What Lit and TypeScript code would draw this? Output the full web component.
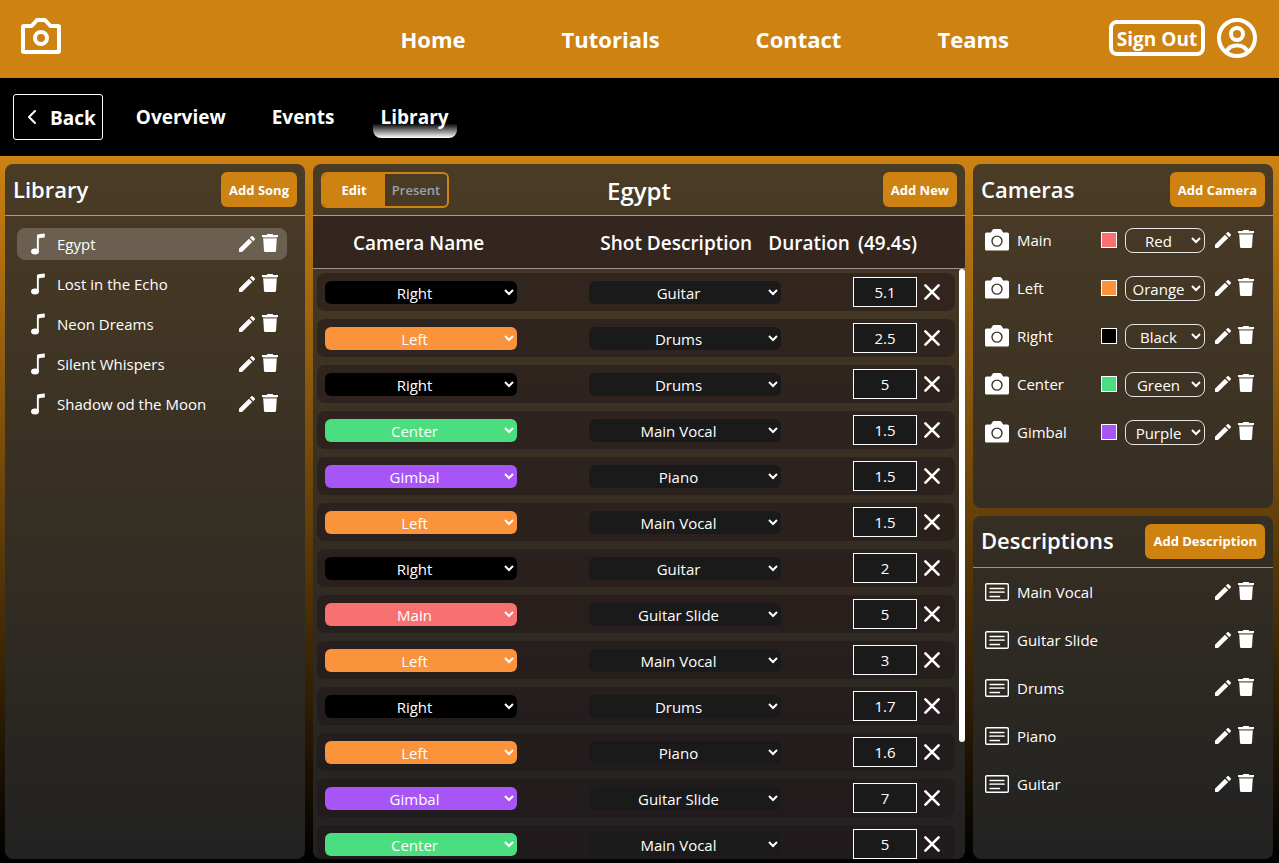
import { LitElement, html, css, svg } from "lit";
import { customElement, property, query, state } from "lit/decorators.js";
import { classMap } from "lit/directives/class-map.js";

const CAMERA_COLORS: Record<string, string> = {
  Main: "red",
  Left: "orange",
  Right: "black",
  Center: "green",
  Gimbal: "purple",
};
const COLOR_NAMES = ["Red", "Orange", "Black", "Green", "Purple"];
const DESCRIPTIONS = ["Main Vocal", "Guitar Slide", "Drums", "Piano", "Guitar"];
const SONGS = ["Egypt", "Lost in the Echo", "Neon Dreams", "Silent Whispers", "Shadow od the Moon"];

interface Shot {
  camera: string;
  description: string;
  duration: string;
}

const SHOTS: Shot[] = [
  ["Right", "Guitar", "5.1"],
  ["Left", "Drums", "2.5"],
  ["Right", "Drums", "5"],
  ["Center", "Main Vocal", "1.5"],
  ["Gimbal", "Piano", "1.5"],
  ["Left", "Main Vocal", "1.5"],
  ["Right", "Guitar", "2"],
  ["Main", "Guitar Slide", "5"],
  ["Left", "Main Vocal", "3"],
  ["Right", "Drums", "1.7"],
  ["Left", "Piano", "1.6"],
  ["Gimbal", "Guitar Slide", "7"],
  ["Center", "Main Vocal", "5"],
  ["Left", "Drums", "2"],
  ["Right", "Guitar", "3"],
  ["Main", "Piano", "2"],
].map(([camera, description, duration]) => ({ camera, description, duration }));

const ICONS = {
  logo: {
    box: "0 0 40 36",
    art: svg`<g fill="none" stroke="currentColor" stroke-width="4" stroke-linejoin="round"><path d="M3 8H10.6L16 2H24L29.4 8H37Q38 8 38 9V33Q38 34 37 34H3Q2 34 2 33V9Q2 8 3 8Z"/><circle cx="20" cy="20" r="6"/></g>`,
  },
  user: {
    box: "0 0 40 40",
    art: svg`<g fill="none" stroke="currentColor" stroke-width="4"><circle cx="20" cy="20" r="18"/><circle cx="20" cy="16" r="6"/><path d="M9.5 34C11 29.5 14 27.5 20 27.5S29 29.5 30.5 34"/></g>`,
  },
  back: {
    box: "0 0 8 14",
    art: svg`<path d="M7 1L1 7L7 13" fill="none" stroke="currentColor" stroke-width="2" stroke-linecap="round" stroke-linejoin="round"/>`,
  },
  note: {
    box: "0 0 15 22",
    art: svg`<g fill="currentColor"><ellipse cx="4" cy="18.5" rx="4" ry="3"/><path d="M5.9 3.2C5.9 1.2 6.8 1.4 9.6 1C12.2.6 13.2.2 13.5.6Q14 1 13.8 4.2C12 4.9 8 4.6 7.8 5.8V18.5H5.9Z"/></g>`,
  },
  pencil: {
    box: "3 3 18 18",
    art: svg`<path fill="currentColor" d="M20.7 7a1 1 0 0 0 0-1.4l-2.3-2.3a1 1 0 0 0-1.4 0l-1.8 1.7 3.8 3.8zM3 17.7V20.5q0 .5.5.5H6.2q.3 0 .5-.2L17.9 9.8 14.2 6.1 3.2 17.2Q3 17.4 3 17.7z"/>`,
  },
  trash: {
    box: "0 0 16 18",
    art: svg`<g fill="currentColor"><path d="M5 0H11V1H16V3H0V1H5Z"/><path opacity=".45" d="M1 3H15V5H1Z"/><path d="M1.2 4.8H14.8L14 16.8Q13.9 18 12.7 18H3.3Q2.1 18 2 16.8Z"/></g>`,
  },
  camera: {
    box: "0 0 24 22",
    art: svg`<path fill="currentColor" fill-rule="evenodd" d="M1.5 3.5H6L7.4 1.1Q8 0 9.2 0H14.8Q16 0 16.6 1.1L18 3.5H22.5Q24 3.5 24 5V20Q24 21.5 22.5 21.5H1.5Q0 21.5 0 20V5Q0 3.5 1.5 3.5ZM12 6.4A5.7 5.7 0 1 0 12 17.8A5.7 5.7 0 1 0 12 6.4ZM12 7.8A4.3 4.3 0 1 1 12 16.4A4.3 4.3 0 1 1 12 7.8Z"/>`,
  },
  caption: {
    box: "0 0 24 18",
    art: svg`<g fill="none" stroke="currentColor" stroke-width="1.4" stroke-linecap="round"><rect x=".7" y=".7" width="22.6" height="16.6" rx="1.2"/><path d="M5 5.5H19M5 13.5H14.5"/><path d="M5 9.2H19" stroke-width="1.8" opacity=".8"/></g>`,
  },
  close: {
    box: "0 0 16 16",
    art: svg`<path d="M1.4 1.4L14.6 14.6M14.6 1.4L1.4 14.6" fill="none" stroke="currentColor" stroke-width="2.6" stroke-linecap="round"/>`,
  },
};

const icon = (name: keyof typeof ICONS) =>
  html`<svg class="icon icon-${name}" viewBox=${ICONS[name].box} aria-hidden="true">${ICONS[name].art}</svg>`;

const shared = css`
  * {
    box-sizing: border-box;
  }
  :host {
    font-family: "Open Sans", "Noto Sans", sans-serif;
    color: #fff;
  }
  button,
  input,
  select {
    margin: 0;
    font: inherit;
    color: inherit;
  }
  button {
    padding: 0;
    border: 0;
    background: none;
    cursor: pointer;
  }
  h2,
  ul {
    margin: 0;
    padding: 0;
    list-style: none;
  }
  .icon {
    display: block;
    flex: none;
  }
  .icon-pencil {
    width: 16px;
    height: 16px;
  }
  .icon-trash {
    width: 16px;
    height: 18px;
  }
  .primary {
    height: 35px;
    padding: 0 8px;
    border-radius: 6px;
    background: #cd8212;
    font-size: 13px;
    font-weight: 700;
    white-space: nowrap;
  }
  .red {
    background-color: #f87171;
  }
  .orange {
    background-color: #fb923c;
  }
  .black {
    background-color: #000;
  }
  .green {
    background-color: #4ade80;
  }
  .purple {
    background-color: #a855f7;
  }
`;

@customElement("side-panel")
class SidePanel extends LitElement {
  @property() heading = "";
  @property() action = "";

  static styles = [
    shared,
    css`
      :host {
        display: flex;
        flex-direction: column;
        min-height: 0;
        border-radius: 8px;
        background: rgba(42, 42, 42, 0.8);
        overflow: hidden;
      }
      .head {
        display: flex;
        align-items: center;
        justify-content: space-between;
        height: 52px;
        padding: 0 8px;
        border-bottom: 1px solid rgba(255, 255, 255, 0.5);
      }
      h2 {
        padding-bottom: 2px;
        font-size: 22px;
        font-weight: 600;
      }
    `,
  ];

  render() {
    return html`
      <header class="head">
        <h2>${this.heading}</h2>
        <button class="primary">${this.action}</button>
      </header>
      <slot></slot>
    `;
  }
}

@customElement("row-tools")
class RowTools extends LitElement {
  @property() name = "";

  static styles = [
    shared,
    css`
      :host {
        display: flex;
        align-items: center;
        gap: 7px;
      }
      .trash {
        padding-bottom: 2px;
      }
    `,
  ];

  render() {
    return html`
      <button aria-label="Edit ${this.name}">${icon("pencil")}</button>
      <button class="trash" aria-label="Delete ${this.name}">${icon("trash")}</button>
    `;
  }
}

@customElement("shot-table")
class ShotTable extends LitElement {
  @state() private shots = SHOTS;
  @state() private mode = "Edit";
  @state() private thumbSize = 100;
  @state() private thumbTop = 0;
  @query("tbody") private list!: HTMLElement;

  private observer = new ResizeObserver(() => this.measure());

  static styles = [
    shared,
    css`
      :host {
        display: flex;
        flex-direction: column;
        min-width: 0;
        min-height: 0;
        border-radius: 8px;
        background: rgba(42, 42, 42, 0.8);
        overflow: hidden;
      }
      .head {
        display: grid;
        grid-template-columns: 1fr auto 1fr;
        align-items: center;
        flex: none;
        height: 52px;
        padding: 0 8px;
        border-bottom: 1px solid rgba(255, 255, 255, 0.5);
      }
      h2 {
        padding-top: 2px;
        font-size: 24px;
        font-weight: 600;
      }
      .head .primary {
        justify-self: end;
      }
      .switch {
        display: flex;
        justify-self: start;
        width: 128px;
        height: 36px;
        border: 2px solid #cd8212;
        border-radius: 6px;
        overflow: hidden;
      }
      .switch button {
        flex: 1;
        color: #9ca3af;
        font-size: 13px;
        font-weight: 600;
      }
      .switch .on {
        background: #cd8212;
        color: #fff;
        font-weight: 700;
      }
      .area {
        position: relative;
        display: flex;
        flex: 1;
        min-height: 0;
      }
      table,
      tbody {
        display: flex;
        flex: 1;
        flex-direction: column;
        min-height: 0;
      }
      thead {
        display: block;
        flex: none;
      }
      th,
      td {
        display: block;
        padding: 0;
      }
      .titles {
        display: flex;
        align-items: center;
        gap: 16px;
        height: 53px;
        padding: 2px 48px 0 40px;
        border-bottom: 1px solid rgba(255, 255, 255, 0.5);
        background: rgba(32, 20, 24, 0.5);
        font-size: 19px;
        white-space: nowrap;
      }
      .titles th {
        display: flex;
        gap: 8px;
        font-weight: 600;
      }
      .titles th:first-child {
        margin-right: auto;
      }
      tbody {
        padding-right: 6px;
        overflow-y: auto;
      }
      tbody::-webkit-scrollbar {
        display: none;
      }
      .track {
        position: absolute;
        top: 53px;
        right: 0;
        bottom: 0;
        width: 6px;
        pointer-events: none;
      }
      .thumb {
        position: absolute;
        width: 6px;
        border-radius: 3px;
        background: #fff;
      }
      .shot {
        display: flex;
        align-items: center;
        justify-content: space-between;
        flex: none;
        height: 38px;
        margin: 4px;
        padding: 0 8px;
        border-radius: 8px;
        background: rgba(32, 20, 24, 0.5);
      }
      .shot td {
        display: flex;
        align-items: center;
      }
      select {
        width: 192px;
        height: 23px;
        padding: 1px 1px 0 0;
        border: 0;
        border-radius: 6px;
        font-size: 15px;
        text-align: center;
      }
      .description {
        background-color: #1a1a1a;
      }
      input {
        width: 64px;
        height: 30px;
        padding: 0;
        border: 1px solid #fff;
        background: #1a1a1a;
        font-size: 15px;
        text-align: center;
        appearance: textfield;
      }
      input::-webkit-inner-spin-button {
        display: none;
      }
      .remove {
        display: grid;
        place-items: center;
        width: 30px;
        height: 30px;
      }
      .icon-close {
        width: 16px;
        height: 16px;
      }
    `,
  ];

  firstUpdated() {
    this.observer.observe(this.list);
  }

  updated() {
    this.measure();
  }

  disconnectedCallback() {
    super.disconnectedCallback();
    this.observer.disconnect();
  }

  private measure() {
    const { clientHeight, scrollHeight, scrollTop } = this.list;
    this.thumbSize = (clientHeight / scrollHeight) * 100;
    this.thumbTop = (scrollTop / scrollHeight) * 100;
  }

  private options(list: string[], current: string) {
    return list.map((item) => html`<option ?selected=${item === current}>${item}</option>`);
  }

  private remove(shot: Shot) {
    this.shots = this.shots.filter((other) => other !== shot);
  }

  render() {
    return html`
      <header class="head">
        <div class="switch">
          ${["Edit", "Present"].map(
            (mode) => html`<button
              class=${classMap({ on: this.mode === mode })}
              aria-pressed=${this.mode === mode}
              @click=${() => (this.mode = mode)}
            >
              ${mode}
            </button>`,
          )}
        </div>
        <h2>Egypt</h2>
        <button class="primary">Add New</button>
      </header>
      <div class="area">
        <table>
          <thead>
            <tr class="titles">
              <th scope="col">Camera Name</th>
              <th scope="col">Shot Description</th>
              <th scope="col"><span>Duration</span> <span>(49.4s)</span></th>
            </tr>
          </thead>
          <tbody @scroll=${this.measure}>
            ${this.shots.map(
              (shot) => html`<tr class="shot">
                <td>
                  <select class=${CAMERA_COLORS[shot.camera]} aria-label="Camera">
                    ${this.options(Object.keys(CAMERA_COLORS), shot.camera)}
                  </select>
                </td>
                <td>
                  <select class="description" aria-label="Shot description">
                    ${this.options(DESCRIPTIONS, shot.description)}
                  </select>
                </td>
                <td>
                  <input type="number" step="0.1" aria-label="Duration in seconds" .value=${shot.duration} />
                  <button class="remove" aria-label="Remove shot" @click=${() => this.remove(shot)}>
                    ${icon("close")}
                  </button>
                </td>
              </tr>`,
            )}
          </tbody>
        </table>
        <div class="track">
          <div class="thumb" style="height: ${this.thumbSize}%; top: ${this.thumbTop}%"></div>
        </div>
      </div>
    `;
  }
}

@customElement("app-root")
class AppRoot extends LitElement {
  @state() private song = "Egypt";

  static styles = [
    shared,
    css`
      :host {
        display: flex;
        flex-direction: column;
        height: 100vh;
        background: #000;
        font-size: 15px;
      }
      a {
        color: inherit;
        text-decoration: none;
      }
      .top {
        display: flex;
        align-items: center;
        flex: none;
        height: 78px;
        padding: 0 22px 2px 21px;
        background: #cd8212;
      }
      .logo {
        padding-bottom: 4px;
      }
      .icon-logo {
        width: 40px;
        height: 36px;
      }
      .icon-user {
        width: 40px;
        height: 40px;
      }
      .pages {
        display: flex;
        flex: 1;
        justify-content: flex-end;
        gap: 96px;
        padding: 2px 100px 0 0;
        font-size: 22px;
        font-weight: 700;
      }
      .account {
        display: flex;
        align-items: center;
        gap: 12px;
      }
      .signout {
        width: 96px;
        height: 36px;
        padding-top: 2px;
        border: 4px solid #fff;
        border-radius: 8px;
        font-size: 19px;
        line-height: 26px;
        font-weight: 700;
        white-space: nowrap;
      }
      .sub {
        display: flex;
        align-items: center;
        gap: 30px;
        flex: none;
        height: 78px;
        padding: 0 13px;
        font-size: 19px;
        font-weight: 700;
      }
      .back {
        display: flex;
        align-items: center;
        gap: 14px;
        height: 46px;
        margin-right: -5px;
        padding: 0 6px 0 14px;
        border: 1px solid #fff;
        border-radius: 3px;
      }
      .back span {
        padding-top: 2px;
      }
      .icon-back {
        width: 8px;
        height: 14px;
      }
      .tab {
        height: 42px;
        padding: 0 8px;
        border-radius: 8px;
        line-height: 42px;
      }
      .current {
        background: linear-gradient(to bottom, transparent 65%, #fff);
      }
      .board {
        display: grid;
        grid-template-columns: 300px minmax(0, 1fr) 300px;
        gap: 8px;
        flex: 1;
        min-height: 0;
        padding: 8px 6px 4px 5px;
        background: linear-gradient(to bottom, #cd8212, #000);
      }
      .side {
        display: grid;
        grid-template-rows: 1fr 1fr;
        gap: 8px;
        min-height: 0;
      }
      .songs {
        display: grid;
        gap: 8px;
        padding: 12px 18px 0 12px;
      }
      .song {
        display: flex;
        align-items: center;
        gap: 11px;
        height: 32px;
        padding: 0 9px 0 14px;
        border-radius: 8px;
      }
      .active {
        background: rgba(255, 255, 255, 0.2);
      }
      .icon-note {
        width: 15px;
        height: 22px;
      }
      .name {
        flex: 1;
        text-align: left;
        white-space: nowrap;
      }
      .items {
        display: grid;
        gap: 16px;
        padding: 8px 19px 0 12px;
      }
      .item {
        display: flex;
        align-items: center;
        gap: 8px;
        height: 32px;
      }
      .item row-tools {
        margin-left: 2px;
      }
      .icon-camera {
        width: 24px;
        height: 22px;
      }
      .icon-caption {
        width: 24px;
        height: 18px;
      }
      .swatch {
        width: 16px;
        height: 16px;
        border: 1px solid #fff;
      }
      .tint {
        width: 80px;
        height: 25px;
        padding: 1px 1px 0 0;
        border: 1px solid #e5e5e5;
        border-radius: 8px;
        background: transparent;
        font-size: 15px;
        text-align: center;
      }
      .tint option {
        background: #1a1a1a;
      }
    `,
  ];

  render() {
    return html`
      <header class="top">
        <a class="logo" href="#home" aria-label="Home page">${icon("logo")}</a>
        <nav class="pages">
          ${["Home", "Tutorials", "Contact", "Teams"].map(
            (page) => html`<a href="#${page.toLowerCase()}">${page}</a>`,
          )}
        </nav>
        <div class="account">
          <button class="signout">Sign Out</button>
          <button aria-label="Account">${icon("user")}</button>
        </div>
      </header>
      <nav class="sub">
        <a class="back" href="#back">${icon("back")}<span>Back</span></a>
        ${["Overview", "Events", "Library"].map(
          (tab) => html`<a
            class=${classMap({ tab: true, current: tab === "Library" })}
            href="#${tab.toLowerCase()}"
            >${tab}</a
          >`,
        )}
      </nav>
      <main class="board">
        <side-panel heading="Library" action="Add Song">
          <ul class="songs">
            ${SONGS.map(
              (song) => html`<li class=${classMap({ song: true, active: song === this.song })}>
                ${icon("note")}
                <button class="name" @click=${() => (this.song = song)}>${song}</button>
                <row-tools name=${song}></row-tools>
              </li>`,
            )}
          </ul>
        </side-panel>
        <shot-table></shot-table>
        <div class="side">
          <side-panel heading="Cameras" action="Add Camera">
            <ul class="items">
              ${Object.entries(CAMERA_COLORS).map(
                ([name, color]) => html`<li class="item">
                  ${icon("camera")}
                  <span class="name">${name}</span>
                  <span class="swatch ${color}"></span>
                  <select class="tint" aria-label="${name} color">
                    ${COLOR_NAMES.map(
                      (option) =>
                        html`<option ?selected=${option.toLowerCase() === color}>${option}</option>`,
                    )}
                  </select>
                  <row-tools name=${name}></row-tools>
                </li>`,
              )}
            </ul>
          </side-panel>
          <side-panel heading="Descriptions" action="Add Description">
            <ul class="items">
              ${DESCRIPTIONS.map(
                (name) => html`<li class="item">
                  ${icon("caption")}
                  <span class="name">${name}</span>
                  <row-tools name=${name}></row-tools>
                </li>`,
              )}
            </ul>
          </side-panel>
        </div>
      </main>
    `;
  }
}
